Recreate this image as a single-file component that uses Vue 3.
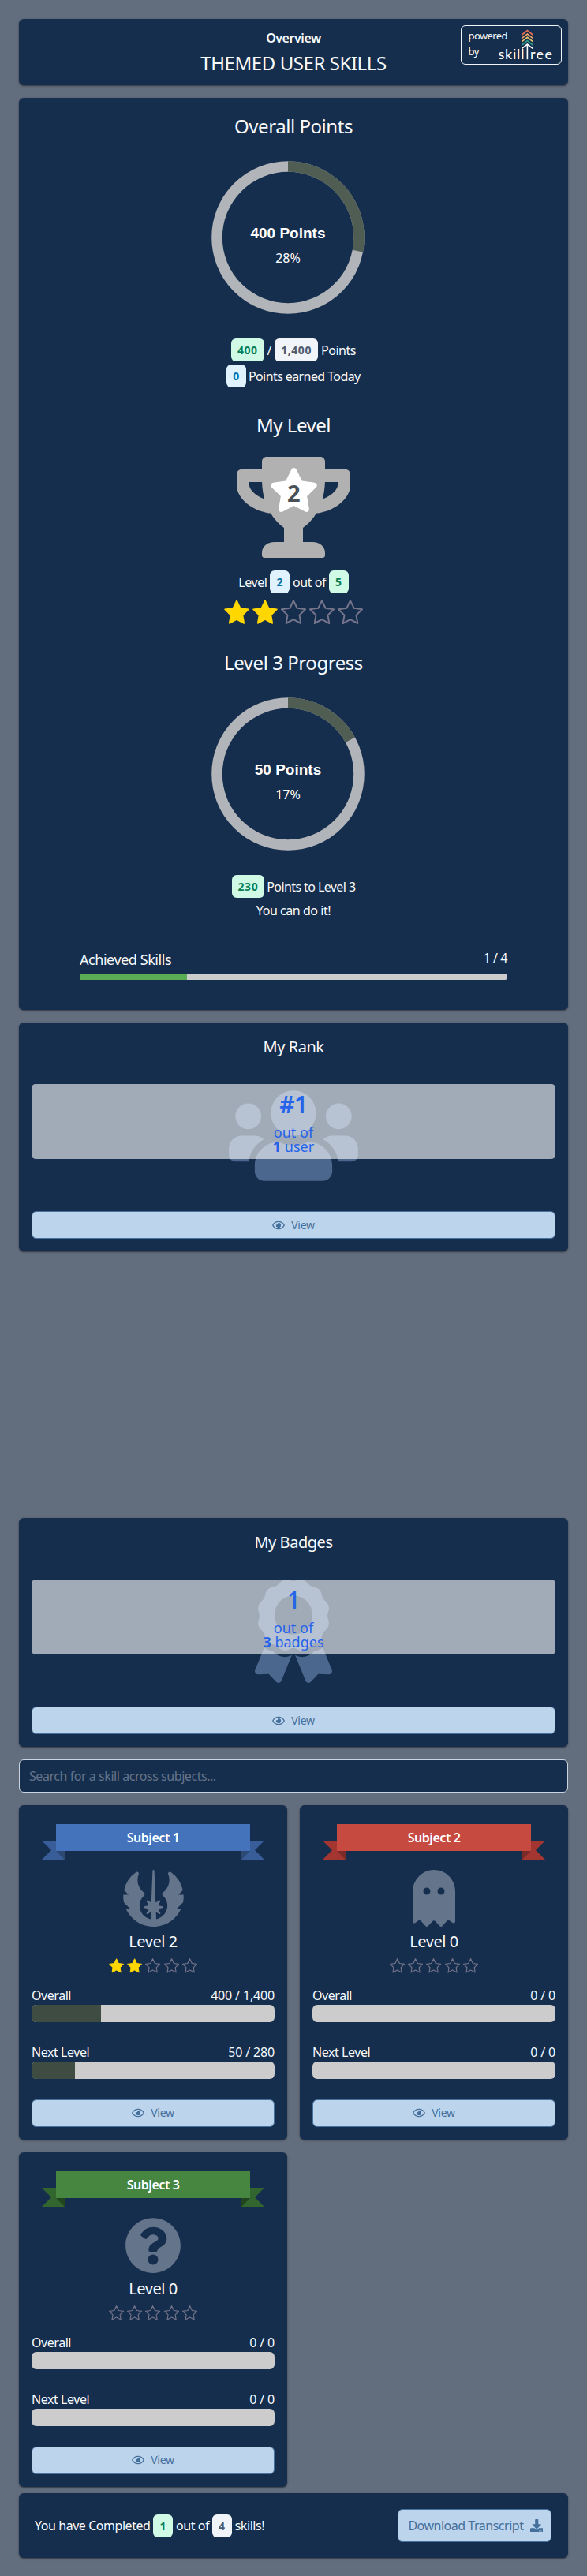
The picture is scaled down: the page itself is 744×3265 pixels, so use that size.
<script setup>
const eye = 'M288 144a110.94 110.94 0 0 0-31.24 5 55.4 55.4 0 0 1 7.24 27 56 56 0 0 1-56 56 55.4 55.4 0 0 1-27-7.24A111.71 111.71 0 1 0 288 144zm284.52 97.4C518.29 135.59 410.93 64 288 64S57.68 135.64 3.48 241.41a32.35 32.35 0 0 0 0 29.19C57.71 376.41 165.07 448 288 448s230.32-71.64 284.52-177.41a32.35 32.35 0 0 0 0-29.19zM288 400c-98.65 0-189.09-55-237.93-144C98.91 167 189.34 112 288 112s189.09 55 237.93 144C477.1 345 386.66 400 288 400z'
const trophy = 'M552 64H448V24c0-13.3-10.7-24-24-24H152c-13.3 0-24 10.7-24 24v40H24C10.7 64 0 74.7 0 88v56c0 35.7 22.5 72.4 61.9 100.7 31.5 22.7 69.8 37.1 110 41.7C203.3 338.5 240 360 240 360v72h-48c-35.3 0-64 20.7-64 56v12c0 6.6 5.4 12 12 12h296c6.6 0 12-5.4 12-12v-12c0-35.3-28.7-56-64-56h-48v-72s36.7-21.5 68.1-73.6c40.3-4.6 78.6-19 110-41.7 39.3-28.3 61.9-65 61.9-100.7V88c0-13.3-10.7-24-24-24zM99.3 192.8C74.9 175.2 64 155.6 64 144v-16h64.2c1 32.6 5.8 61.2 12.8 86.2-15.1-5.2-29.2-12.4-41.7-21.4zM512 144c0 16.1-17.7 36.1-35.3 48.8-12.5 9-26.7 16.2-41.8 21.4 7-25 11.8-53.6 12.8-86.2H512v16z'
const starSolid = 'M259.3 17.8L194 150.2 47.9 171.5c-26.2 3.8-36.7 36.1-17.7 54.6l105.7 103-25 145.5c-4.5 26.3 23.2 46 46.4 33.7L288 439.6l130.7 68.7c23.2 12.2 50.9-7.4 46.4-33.7l-25-145.5 105.7-103c19-18.5 8.5-50.8-17.7-54.6L382 150.2 316.7 17.8c-11.7-23.6-45.6-23.9-57.4 0z'
const users = 'M96 224c35.3 0 64-28.7 64-64s-28.7-64-64-64-64 28.7-64 64 28.7 64 64 64zm448 0c35.3 0 64-28.7 64-64s-28.7-64-64-64-64 28.7-64 64 28.7 64 64 64zm32 32h-64c-17.6 0-33.5 7.1-45.1 18.6 40.3 22.1 68.9 62 75.1 109.4h66c17.7 0 32-14.3 32-32v-32c0-35.3-28.7-64-64-64zm-256 0c61.9 0 112-50.1 112-112S381.9 32 320 32 208 82.1 208 144s50.1 112 112 112zm76.8 32h-8.3c-20.8 10-43.9 16-68.5 16s-47.6-6-68.5-16h-8.3C179.6 288 128 339.6 128 403.2V432c0 26.5 21.5 48 48 48h288c26.5 0 48-21.5 48-48v-28.8c0-63.6-51.6-115.2-115.2-115.2zm-223.7-13.4C161.5 263.1 145.6 256 128 256H64c-35.3 0-64 28.7-64 64v32c0 17.7 14.3 32 32 32h65.9c6.3-47.4 34.9-87.3 75.2-109.4z'
const award = 'M97.12 362.63c-8.69-8.69-4.16-6.24-25.12-11.85-9.51-2.55-17.87-7.45-25.43-13.32L1.2 448.7c-4.39 10.77 3.81 22.47 15.43 22.03l52.69-2.01L105.56 507c8 8.44 22.04 5.81 26.43-4.96l52.05-127.62c-10.84 6.04-22.87 9.58-35.31 9.58-19.5 0-37.82-7.59-51.61-21.37zM382.8 448.7l-45.37-111.24c-7.56 5.88-15.92 10.77-25.43 13.32-21.07 5.64-16.45 3.18-25.12 11.85-13.79 13.78-32.12 21.37-51.62 21.37-12.44 0-24.47-3.55-35.31-9.58L252 502.04c4.39 10.77 18.44 13.4 26.43 4.96l36.25-38.28 52.69 2.01c11.62.44 19.82-11.27 15.43-22.03zM263 340c15.28-15.55 17.03-14.21 38.79-20.14 13.89-3.79 24.75-14.84 28.47-28.98 7.48-28.4 5.54-24.97 25.95-45.75 10.17-10.35 14.14-25.44 10.42-39.58-7.47-28.38-7.48-24.42 0-52.83 3.72-14.14-.25-29.23-10.42-39.58-20.41-20.78-18.47-17.36-25.95-45.75-3.72-14.14-14.58-25.19-28.47-28.98-27.88-7.61-24.52-5.62-44.95-26.41-10.17-10.35-25-14.4-38.89-10.61-27.87 7.6-23.98 7.61-51.9 0-13.89-3.79-28.72.25-38.89 10.61-20.41 20.78-17.05 18.8-44.94 26.41-13.89 3.79-24.75 14.84-28.47 28.98-7.47 28.39-5.54 24.97-25.95 45.75-10.17 10.35-14.15 25.44-10.42 39.58 7.47 28.36 7.48 24.4 0 52.82-3.72 14.14.25 29.23 10.42 39.59 20.41 20.78 18.47 17.35 25.95 45.75 3.72 14.14 14.58 25.19 28.47 28.98C104.6 325.96 106.27 325 121 340c13.23 13.47 33.84 15.88 49.74 5.82a39.676 39.676 0 0 1 42.53 0c15.89 10.06 36.5 7.65 49.73-5.82zM97.66 175.96c0-53.03 42.24-96.02 94.34-96.02s94.34 42.99 94.34 96.02-42.24 96.02-94.34 96.02-94.34-42.98-94.34-96.02z'
const jedi = 'M535.95308,352c-42.64069,94.17188-137.64086,160-247.9848,160q-6.39844,0-12.84377-.29688C171.15558,506.9375,81.26481,442.23438,40.01474,352H79.93668L21.3272,293.40625a264.82522,264.82522,0,0,1-5.10938-39.42187,273.6653,273.6653,0,0,1,.5-29.98438H63.93665L22.546,182.625A269.79782,269.79782,0,0,1,130.51489,20.54688a16.06393,16.06393,0,0,1,9.28127-3,16.36332,16.36332,0,0,1,13.5,7.25,16.02739,16.02739,0,0,1,1.625,15.09374,138.387,138.387,0,0,0-9.84376,51.26563c0,45.10937,21.04691,86.57813,57.71884,113.73437a16.29989,16.29989,0,0,1,1.20313,25.39063c-26.54692,23.98437-41.17194,56.5-41.17194,91.57813,0,60.03124,42.95319,110.28124,99.89079,121.92187l2.5-65.26563L238.062,397a8.33911,8.33911,0,0,1-10-.75,8.025,8.025,0,0,1-1.39063-9.9375l20.125-33.76562-42.06257-8.73438a7.9898,7.9898,0,0,1,0-15.65625l42.06257-8.71875-20.10941-33.73438a7.99122,7.99122,0,0,1,11.35939-10.71874L268.437,295.64062,279.95265,7.67188a7.97138,7.97138,0,0,1,8-7.67188h.04687a8.02064,8.02064,0,0,1,7.95314,7.70312L307.48394,295.625l30.39068-20.67188a8.08327,8.08327,0,0,1,10,.8125,7.99866,7.99866,0,0,1,1.39062,9.90626L329.12461,319.4375l42.07819,8.73438a7.99373,7.99373,0,0,1,0,15.65624l-42.07819,8.71876,20.1094,33.73437a7.97791,7.97791,0,0,1-1.32812,9.92187A8.25739,8.25739,0,0,1,337.87462,397L310.7027,378.53125l2.5,65.34375c48.48446-9.40625,87.57828-48.15625,97.31267-96.5A123.52652,123.52652,0,0,0,371.9528,230.29688a16.30634,16.30634,0,0,1,1.20313-25.42188c36.65631-27.17188,57.6876-68.60938,57.6876-113.73438a138.01689,138.01689,0,0,0-9.85939-51.3125,15.98132,15.98132,0,0,1,1.60937-15.09374,16.36914,16.36914,0,0,1,13.5-7.23438,16.02453,16.02453,0,0,1,9.25,2.98438A271.26947,271.26947,0,0,1,553.25,182.76562L511.99992,224h46.9532C559.3125,229.76562,560,235.45312,560,241.26562a270.092,270.092,0,0,1-5.125,51.85938L495.98427,352Z'
const ghost = 'M186.1.09C81.01 3.24 0 94.92 0 200.05v263.92c0 14.26 17.23 21.39 27.31 11.31l24.92-18.53c6.66-4.95 16-3.99 21.51 2.21l42.95 48.35c6.25 6.25 16.38 6.25 22.63 0l40.72-45.85c6.37-7.17 17.56-7.17 23.92 0l40.72 45.85c6.25 6.25 16.38 6.25 22.63 0l42.95-48.35c5.51-6.2 14.85-7.17 21.51-2.21l24.92 18.53c10.08 10.08 27.31 2.94 27.31-11.31V192C384 84 294.83-3.17 186.1.09zM128 224c-17.67 0-32-14.33-32-32s14.33-32 32-32 32 14.33 32 32-14.33 32-32 32zm128 0c-17.67 0-32-14.33-32-32s14.33-32 32-32 32 14.33 32 32-14.33 32-32 32z'
const question = 'M504 256c0 136.997-111.043 248-248 248S8 392.997 8 256C8 119.083 119.043 8 256 8s248 111.083 248 248zM262.655 90c-54.497 0-89.255 22.957-116.549 63.758-3.536 5.286-2.353 12.415 2.715 16.258l34.699 26.31c5.205 3.947 12.621 3.008 16.665-2.122 17.864-22.658 30.113-35.797 57.303-35.797 20.429 0 45.698 13.148 45.698 32.958 0 14.976-12.363 22.667-32.534 33.976C247.128 238.528 216 254.941 216 296v4c0 6.627 5.373 12 12 12h56c6.627 0 12-5.373 12-12v-1.333c0-28.462 83.186-29.647 83.186-106.667 0-58.002-60.165-102-116.531-102zM256 338c-25.365 0-46 20.635-46 46 0 25.364 20.635 46 46 46s46-20.636 46-46c0-25.364-20.635-46-46-46z'
const download = 'M216 0h80c13.3 0 24 10.7 24 24v168h87.7c17.8 0 26.7 21.5 14.1 34.1L269.7 378.3c-7.5 7.5-19.8 7.5-27.3 0L90.1 226.1c-12.6-12.6-3.7-34.1 14.1-34.1H192V24c0-13.3 10.7-24 24-24zm296 376v112c0 13.3-10.7 24-24 24H24c-13.3 0-24-10.7-24-24V376c0-13.3 10.7-24 24-24h146.7l49 49c20.1 20.1 52.5 20.1 72.6 0l49-49H488c13.3 0 24 10.7 24 24zm-124 88c0-11-9-20-20-20s-20 9-20 20 9 20 20 20 20-9 20-20zm64 0c0-11-9-20-20-20s-20 9-20 20 9 20 20 20 20-9 20-20z'
const ratingStar = '16,1.2 20.6,10.8 31,12.3 23.5,19.7 25.3,30 16,25.1 6.7,30 8.5,19.7 1,12.3 11.4,10.8'

const circumference = 2 * Math.PI * 90
const arc = (pct) => `${(circumference * pct) / 100} ${circumference}`

const subjects = [
  { name: 'Subject 1', theme: 'blue', icon: jedi, box: '0 0 576 512', level: 2, overall: '400 / 1,400', overallPct: 28.6, next: '50 / 280', nextPct: 17.9 },
  { name: 'Subject 2', theme: 'red', icon: ghost, box: '0 0 384 512', level: 0, overall: '0 / 0', overallPct: 0, next: '0 / 0', nextPct: 0 },
  { name: 'Subject 3', theme: 'green', icon: question, box: '0 0 512 512', level: 0, overall: '0 / 0', overallPct: 0, next: '0 / 0', nextPct: 0 },
]
</script>

<template>
  <div class="page">
    <header class="card header">
      <div class="crumb">Overview</div>
      <h1>THEMED USER SKILLS</h1>
      <div class="powered">
        <div class="powered-text">powered<br />by</div>
        <svg class="logo" width="72" height="44" viewBox="0 0 72 44">
          <g fill="none" stroke-width="1.6">
            <path d="M29.6 9l6.8-5.4L43.2 9" stroke="#e76f51" />
            <path d="M29.6 13.4l6.8-5.4 6.8 5.4" stroke="#f4a261" />
            <path d="M29.6 17.7l6.8-5.4 6.8 5.4" stroke="#e9c46a" />
            <path d="M29.6 22l6.8-5.4 6.8 5.4" stroke="#2a9d8f" />
            <path d="M29.6 26.4l6.8-5.4 6.8 5.4M36.4 21v19.2" stroke="#fff" />
          </g>
          <text x="-0.6" y="40.2" textLength="33">skill</text>
          <text x="40" y="40.2" textLength="28">ree</text>
        </svg>
      </div>
    </header>

    <section class="card summary">
      <h2>Overall Points</h2>
      <svg class="ring" width="194" height="194" viewBox="0 0 194 194">
        <circle cx="97" cy="97" r="90" class="track" />
        <circle cx="97" cy="97" r="90" class="value" :stroke-dasharray="arc(28)" transform="rotate(-90 97 97)" />
        <text x="97" y="97.5" class="pts">400 Points</text>
        <text x="97" y="129" class="pct">28%</text>
      </svg>
      <div class="line first"><b class="tag green">400</b><span>/</span><b class="tag grey">1,400</b><span>Points</span></div>
      <div class="line second"><b class="tag blue">0</b><span class="tight">Points earned Today</span></div>

      <h2 class="lvl">My Level</h2>
      <div class="trophy">
        <svg width="144" height="128" viewBox="0 0 576 512"><path :d="trophy" fill="#b1b1b1" /></svg>
        <svg class="cup-star" width="63" height="56" viewBox="0 0 576 512"><path :d="starSolid" fill="#fff" /></svg>
        <b class="cup-num">2</b>
      </div>
      <div class="line level-line"><span>Level</span><b class="tag blue">2</b><span>out of</span><b class="tag green">5</b></div>
      <div class="stars big">
        <svg v-for="n in 5" :key="n" viewBox="0 0 32 32"><polygon :points="ratingStar" :class="n <= 2 ? 'on' : 'off'" /></svg>
      </div>

      <h2 class="prog">Level 3 Progress</h2>
      <svg class="ring" width="194" height="194" viewBox="0 0 194 194">
        <circle cx="97" cy="97" r="90" class="track" />
        <circle cx="97" cy="97" r="90" class="value" :stroke-dasharray="arc(17)" transform="rotate(-90 97 97)" />
        <text x="97" y="97.5" class="pts">50 Points</text>
        <text x="97" y="129" class="pct">17%</text>
      </svg>
      <div class="line first"><b class="tag green">230</b><span class="tight">Points to Level 3</span></div>
      <div class="cheer">You can do it!</div>

      <div class="achieved">
        <div class="row"><span class="ach-label">Achieved Skills</span><span>1 / 4</span></div>
        <div class="thin"><div class="thin-fill"></div></div>
      </div>
    </section>

    <section class="card stat rank">
      <h3>My Rank</h3>
      <div class="stat-box">
        <svg class="stat-icon" width="164" height="131" viewBox="0 0 640 512"><path :d="users" /></svg>
        <div class="veil"><div class="num heavy">#1</div><div class="of">out of</div><div class="of"><b>1</b> user</div></div>
      </div>
      <button class="view"><svg viewBox="0 0 576 512"><path :d="eye" /></svg>View</button>
    </section>

    <section class="card stat badges">
      <h3>My Badges</h3>
      <div class="stat-box">
        <svg class="stat-icon" width="98" height="131" viewBox="0 0 384 512"><path :d="award" /></svg>
        <div class="veil"><div class="num">1</div><div class="of">out of</div><div class="of"><b>3</b> badges</div></div>
      </div>
      <button class="view"><svg viewBox="0 0 576 512"><path :d="eye" /></svg>View</button>
    </section>

    <input class="search" type="text" placeholder="Search for a skill across subjects..." />

    <div class="grid">
      <section v-for="s in subjects" :key="s.name" class="card subject" :class="s.theme">
        <div class="ribbon">
          <svg class="tails" width="282" height="45" viewBox="0 0 282 45">
            <path class="tail" d="M0 21H29V45H0L12 33zM282 21H253V45H282L270 33z" />
            <path class="fold" d="M18 34H29V45zM264 34H253V45z" />
          </svg>
          <div class="band">{{ s.name }}</div>
        </div>
        <svg class="subject-icon" height="72" :viewBox="s.box"><path :d="s.icon" /></svg>
        <div class="subject-level">Level {{ s.level }}</div>
        <div class="stars small">
          <svg v-for="n in 5" :key="n" viewBox="0 0 32 32"><polygon :points="ratingStar" :class="n <= s.level ? 'on' : 'off'" /></svg>
        </div>
        <div class="row overall"><span>Overall</span><span class="figures">{{ s.overall }}</span></div>
        <div class="bar"><div class="fill" :style="{ width: s.overallPct + '%' }"></div></div>
        <div class="row next"><span>Next Level</span><span class="figures">{{ s.next }}</span></div>
        <div class="bar"><div class="fill" :style="{ width: s.nextPct + '%' }"></div></div>
        <button class="view"><svg viewBox="0 0 576 512"><path :d="eye" /></svg>View</button>
      </section>
    </div>

    <footer class="card footer">
      <div class="line"><span>You have Completed</span><b class="tag green">1</b><span>out of</span><b class="tag grey">4</b><span>skills!</span></div>
      <button class="transcript">Download Transcript<svg viewBox="0 0 512 512"><path :d="download" /></svg></button>
    </footer>
  </div>
</template>

<style>
body { background: #626d7d; }
</style>

<style scoped>
.page {
  box-sizing: border-box;
  width: 744px;
  height: 3265px;
  padding: 24px;
  background: #626d7d;
  color: #f8fafc;
  font: 16px/24px "Noto Sans", "Open Sans", sans-serif;
  letter-spacing: -0.028em;
}
.page * { box-sizing: border-box; }
svg { display: block; flex: none; }
h1, h2, h3 { margin: 0; font-weight: 400; }
h1, h2 { font-size: 24px; line-height: 32px; }
h1 { letter-spacing: -0.018em; }
.card {
  background: #162e4d;
  border-radius: 6px;
  box-shadow: 0 1px 3px rgba(0, 0, 0, 0.3), 0 1px 1px rgba(0, 0, 0, 0.25);
}
.header { position: relative; height: 84px; padding-top: 12px; text-align: center; }
.crumb { font-weight: 600; }
.header h1 { margin-top: 4px; }
.powered {
  position: absolute;
  top: 8px;
  right: 8px;
  display: flex;
  width: 128px;
  height: 50px;
  padding: 3px 0 0 8.5px;
  border: 1px solid #f1f5f9;
  border-radius: 6px;
}
.powered-text { width: 38px; font-size: 13px; line-height: 19.5px; text-align: left; letter-spacing: -0.045em; }
.logo { margin-top: -1px; overflow: visible; }
.logo text { fill: #fff; font: 18px Lato, sans-serif; letter-spacing: 0; }

.summary { display: flex; flex-direction: column; align-items: center; height: 1156px; margin-top: 16px; padding-top: 20px; }
.ring { margin: 28px 15px 0 0; }
.track, .value { fill: none; stroke-width: 13.6; }
.track { stroke: #b1b4b9; }
.value { stroke: #505d52; }
.pts { fill: #fff; font: 700 19px "Liberation Sans", sans-serif; text-anchor: middle; letter-spacing: 0; }
.pct { fill: #fff; font-size: 16px; text-anchor: middle; letter-spacing: 0; }
.line { display: flex; align-items: center; gap: 4px; height: 29px; }
.tight { letter-spacing: -0.037em; margin-left: -1px; }
.first { margin-top: 31px; }
.second { margin-top: 4px; }
.tag { padding: 0 8px; border-radius: 6px; font-size: 14px; line-height: 29px; font-weight: 700; letter-spacing: 0.04em; }
.tag.green { background: #d0fae5; color: #0c7f57; }
.tag.blue { background: #e0f2fe; color: #0873a8; }
.tag.grey { background: #f1f5f9; color: #4c5a6d; }
.lvl { margin-top: 32px; }
.trophy { position: relative; width: 144px; height: 128px; margin-top: 24px; }
.cup-star { position: absolute; left: 41px; top: 14px; }
.cup-num { position: absolute; left: 0; right: 0; top: 28px; font-size: 29px; line-height: 36px; color: #495057; text-align: center; }
.level-line { margin-top: 16px; }
.stars { display: flex; }
.stars .on { fill: #ffd700; stroke: #ffd700; stroke-width: 1.6; stroke-linejoin: round; }
.stars .off { fill: none; stroke: #74748a; stroke-width: 2; stroke-linejoin: round; }
.big { gap: 4px; margin-top: 8px; }
.big svg { width: 32px; height: 32px; }
.prog { margin-top: 32px; }
.cheer { margin-top: 4px; }
.row { display: flex; justify-content: space-between; }
.figures { letter-spacing: -0.01em; }
.achieved { width: 542px; margin-top: 36px; }
.ach-label { font-size: 18px; line-height: 28px; }
.thin { height: 8px; margin-top: 4px; border-radius: 3px; background: #ccc; overflow: hidden; }
.thin-fill { width: 25%; height: 100%; background: #5aad52; }

.stat { height: 290px; padding: 17px 16px 0; text-align: center; }
.rank { margin-top: 16px; }
.badges { margin-top: 338px; }
h3 { font-size: 20px; line-height: 28px; }
.stat-box { position: relative; height: 131px; margin-top: 33px; display: flex; justify-content: center; }
.stat-icon { fill: #4c678e; }
.veil { position: absolute; inset: 0 0 auto; height: 95px; border-radius: 5px; background: rgba(255, 255, 255, 0.6); color: #2563eb; }
.num { margin-top: 8px; font-size: 30px; line-height: 36px; font-weight: 500; }
.heavy { font-weight: 600; }
.of { font-size: 18px; line-height: 18px; letter-spacing: 0; }
.num + .of { margin-top: 8px; }
.view {
  display: flex;
  align-items: center;
  justify-content: center;
  gap: 8px;
  width: 100%;
  height: 35px;
  padding: 0;
  border: 1px solid #47719f;
  border-radius: 6px;
  background: #bdd4ed;
  color: #44709b;
  font: 14px/20px "Noto Sans", sans-serif;
  letter-spacing: -0.02em;
}
.view svg { width: 16px; height: 14px; fill: #44709b; }
.stat .view { margin-top: 30px; }

.search {
  display: block;
  width: 100%;
  height: 42px;
  margin-top: 16px;
  padding: 0 12px;
  border: 1px solid #cbd5e1;
  border-radius: 6px;
  background: #162e4d;
  color: #fff;
  font: 16px/24px "Noto Sans", sans-serif;
  letter-spacing: -0.028em;
}
.search::placeholder { color: #64748b; opacity: 1; }

.grid { display: grid; grid-template-columns: 340px 340px; gap: 16px; margin-top: 16px; }
.subject { display: flex; flex-direction: column; align-items: center; height: 424px; padding: 24px 16px 0; }
.subject .row { width: 100%; }
.ribbon { position: relative; width: 282px; height: 45px; }
.tails { position: absolute; inset: 0; }
.band { position: relative; height: 34px; margin: 0 18px; line-height: 34px; font-weight: 600; text-align: center; color: #fff; }
.blue .band { background: #4472bb; }
.blue .tail { fill: #385d98; }
.blue .fold { fill: #2c4974; }
.red .band { background: #c64a40; }
.red .tail { fill: #a33630; }
.red .fold { fill: #7a2a27; }
.green .band { background: #468640; }
.green .tail { fill: #33652e; }
.green .fold { fill: #21451f; }
.subject-icon { margin-top: 13px; fill: #64748b; }
.subject-level { margin-top: 5px; font-size: 20px; line-height: 28px; }
.small { gap: 4px; margin-top: 7px; }
.small svg { width: 19.2px; height: 19.2px; }
.overall { margin-top: 15.8px; }
.next { margin-top: 26px; }
.bar { width: 100%; height: 22px; border-radius: 6px; background: #ccc; overflow: hidden; }
.fill { height: 100%; background: #3e4c42; }
.subject .view { margin-top: 26px; }

.footer { display: flex; align-items: center; justify-content: space-between; height: 82px; margin-top: 8px; padding: 0 21px 0 20px; }
.transcript {
  display: flex;
  align-items: center;
  gap: 8px;
  height: 42px;
  padding: 0 10px 0 12px;
  border: 1px solid #47719f;
  border-radius: 6px;
  background: #bdd4ed;
  color: #44709b;
  font: 16px/24px "Noto Sans", sans-serif;
  letter-spacing: -0.03em;
}
.transcript svg { width: 16.5px; height: 16.5px; fill: #44709b; }
</style>
